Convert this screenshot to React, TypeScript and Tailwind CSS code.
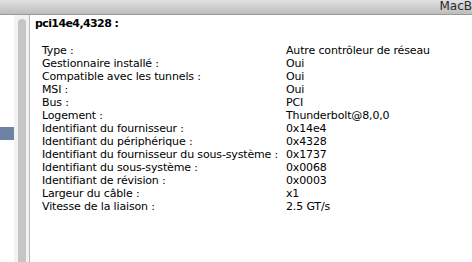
const rows: [string, string][] = [
  ["Type :", "Autre contrôleur de réseau"],
  ["Gestionnaire installé :", "Oui"],
  ["Compatible avec les tunnels :", "Oui"],
  ["MSI :", "Oui"],
  ["Bus :", "PCI"],
  ["Logement :", "Thunderbolt@8,0,0"],
  ["Identifiant du fournisseur :", "0x14e4"],
  ["Identifiant du périphérique :", "0x4328"],
  ["Identifiant du fournisseur du sous-système :", "0x1737"],
  ["Identifiant du sous-système :", "0x0068"],
  ["Identifiant de révision :", "0x0003"],
  ["Largeur du câble :", "x1"],
  ["Vitesse de la liaison :", "2.5 GT/s"],
];

export default function App() {
  return (
    <div className="flex h-[262px] w-[472px] flex-col overflow-hidden bg-white font-['DejaVu_Sans',sans-serif] text-[11px] text-black">
      <div className="flex h-[15px] shrink-0 justify-end border-b border-[#9a9a9a] bg-gradient-to-b from-[#e2e2e2] to-[#bdbdbd]">
        <span className="mt-[-1px] text-[12px] leading-[14px] text-[#2a2a2a]">MacB</span>
      </div>
      <div className="flex flex-1">
        <div className="w-[14px] pt-[112px]">
          <div className="h-[13px] bg-[#6e83a3]" />
        </div>
        <div className="flex w-[16px] border-r border-[#b8b8b8] bg-[#f2f2f2] pl-[4px] pr-[3px] pt-[4px]">
          <div className="w-[8px] flex-1 rounded-t-[4px] bg-[#c6c6c6]" />
        </div>
        <div className="flex-1 pl-[5px] pt-[2px]">
          <div className="h-[13px] font-bold leading-[13px] tracking-[-0.6px]">pci14e4,4328 :</div>
          <div className="pl-[7px] pt-[14px] tracking-[-0.15px]">
            {rows.map(([label, value]) => (
              <div key={label} className="flex h-[13px] leading-[13px]">
                <span className="w-[244px] shrink-0 whitespace-nowrap">{label}</span>
                <span className="whitespace-nowrap">{value}</span>
              </div>
            ))}
          </div>
        </div>
      </div>
    </div>
  );
}
